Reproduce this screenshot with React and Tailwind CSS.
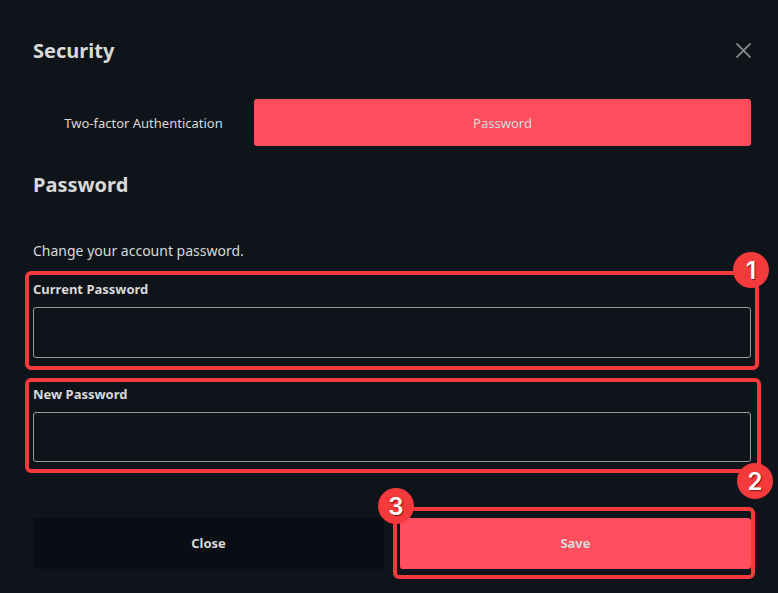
function Marker({ number, frame, badge }) {
  return (
    <div aria-hidden="true" className={`pointer-events-none absolute rounded-md border-4 border-[#f43a3b] ${frame}`}>
      <span
        className={`absolute flex size-9 items-center justify-center rounded-full bg-[#f43a3b] pt-0.5 font-['Inter','Liberation_Sans',sans-serif] text-2xl leading-none font-semibold text-white [text-shadow:1px_1px_1px_rgb(90_0_0/0.7)] ${badge}`}
      >
        {number}
      </span>
    </div>
  );
}

function Field({ id, label, autoComplete, height, children }) {
  return (
    <div className="relative">
      <label htmlFor={id} className="block text-[13px] leading-5 font-bold">
        {label}
      </label>
      <input
        id={id}
        type="password"
        autoComplete={autoComplete}
        className={`mt-2 block w-full rounded-[3px] border border-[#9a9b9d] bg-transparent px-4 outline-none ${height}`}
      />
      {children}
    </div>
  );
}

export default function App() {
  return (
    <main className="min-h-screen bg-[#0f141a] pt-9 pr-[27px] pb-6 pl-[33px] font-['Noto_Sans','Open_Sans',sans-serif] text-[#d9d9d9]">
      <header className="flex items-start justify-between">
        <h1 className="text-xl leading-[30px] font-bold">Security</h1>
        <button type="button" aria-label="Close dialog" className="mt-[7px] text-[#88898b]">
          <svg viewBox="0 0 15 15" className="size-[15px]" fill="none" stroke="currentColor" strokeWidth="1.8">
            <path d="M.5 .5 14.5 14.5M14.5 .5 .5 14.5" />
          </svg>
        </button>
      </header>

      <nav className="mt-[33px] flex h-[47px] text-[13px]">
        <button type="button" className="w-[221px] pt-0.5">
          Two-factor Authentication
        </button>
        <button type="button" className="flex-1 rounded-[3px] bg-[#ff4f5e] pt-0.5">
          Password
        </button>
      </nav>

      <h2 className="mt-6 text-xl leading-[30px] font-bold">Password</h2>
      <p className="mt-[41px] text-sm leading-5">Change your account password.</p>

      <form>
        <div className="mt-[18px] flex flex-col gap-[26px]">
          <Field id="current-password" label="Current Password" autoComplete="current-password" height="h-[51px]">
            <Marker number={1} frame="-top-2 -right-2 -bottom-3 -left-2" badge="-top-[23px] -right-[14px]" />
          </Field>
          <Field id="new-password" label="New Password" autoComplete="new-password" height="h-[50px]">
            <Marker number={2} frame="-top-[6px] -right-[10px] -bottom-[11px] -left-2" badge="-right-4 -bottom-[30px]" />
          </Field>
        </div>

        <div className="mt-14 grid grid-cols-2 gap-4 text-[13px] font-bold">
          <button type="button" className="h-[51px] rounded-[3px] bg-[#0a0d13]">
            Close
          </button>
          <div className="relative">
            <button type="submit" className="h-[51px] w-full rounded-[3px] bg-[#ff4f5e]">
              Save
            </button>
            <Marker number={3} frame="-top-[11px] -right-1 -bottom-[10px] -left-[7px]" badge="-top-[23px] -left-[19px]" />
          </div>
        </div>
      </form>
    </main>
  );
}
